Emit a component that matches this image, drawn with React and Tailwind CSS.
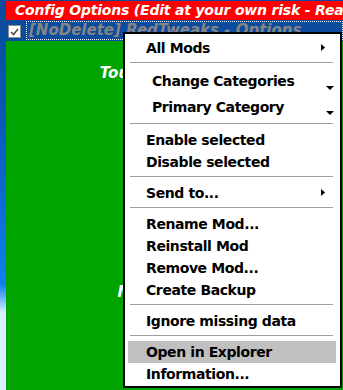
import React from 'react';

const SubArrow = () => (
  <svg className="absolute right-[11px] top-[7px]" width="4" height="7" viewBox="0 0 4 7">
    <polygon points="0,0 4,3.5 0,7" fill="#000" />
  </svg>
);

const DropArrow = ({ top }) => (
  <svg className={`absolute right-[2px] ${top}`} width="8" height="4" viewBox="0 0 8 4">
    <polygon points="0,0 8,0 4,4" fill="#000" />
  </svg>
);

const Item = ({ label, sub, active }) => (
  <div className={`relative ml-[3px] mr-[4px] flex h-[22px] items-center pl-[18px] ${active ? 'bg-[#c0c0c0]' : ''}`}>
    <span>{label}</span>
    {sub && <SubArrow />}
  </div>
);

const Sep = () => <div className="mb-[5px] ml-[5px] mr-[7px] mt-[3px] h-px bg-[#a0a0a0]" />;

const ContextMenu = () => (
  <div className="absolute left-[123px] top-[32px] w-[219px] border-2 border-black bg-white pb-px pt-[3px] font-['DejaVu_Sans',sans-serif] text-[14px] font-bold tracking-[-0.4px] text-black">
    <Item label="All Mods" sub />
    <Sep />
    <div className="relative ml-[3px] mr-[4px] flex h-[26px] items-center pl-[24px]">
      <span>Change Categories</span>
      <DropArrow top="top-[18px]" />
    </div>
    <div className="relative ml-[3px] mr-[4px] flex h-[26px] items-center pl-[24px]">
      <span>Primary Category</span>
      <DropArrow top="top-[17px]" />
    </div>
    <Sep />
    <Item label="Enable selected" />
    <Item label="Disable selected" />
    <Sep />
    <Item label="Send to..." sub />
    <Sep />
    <Item label="Rename Mod..." />
    <Item label="Reinstall Mod" />
    <Item label="Remove Mod..." />
    <Item label="Create Backup" />
    <Sep />
    <Item label="Ignore missing data" />
    <Sep />
    <Item label="Open in Explorer" active />
    <Item label="Information..." />
  </div>
);

export default function App() {
  return (
    <div className="relative flex h-[390px] w-[343px] flex-col overflow-hidden bg-[linear-gradient(180deg,#0a4a98_0%,#0b58b8_30%,#0d6ed8_55%,#1080f0_73%,#60acf4_76%,#d8f0ff_80%,#d8f0ff_100%)] pt-px font-['DejaVu_Sans',sans-serif]">
      <div className="ml-[6px] flex h-[19px] shrink-0 items-center overflow-hidden whitespace-nowrap bg-[#fe0000] pl-[9px] text-[14px] font-bold italic tracking-[-0.2px] text-white">
        Config Options (Edit at your own risk - ReadMe first)
      </div>
      <div className="ml-[6px] flex h-[21px] shrink-0 items-center bg-[#0b4c9e]">
        <div className="ml-[2px] mt-[2px] flex h-[13px] w-[13px] items-center justify-center border border-[#8c8c8c] bg-white">
          <svg width="9" height="8" viewBox="0 0 9 8">
            <polyline points="1,4 3.5,6.5 8,1" fill="none" stroke="#4a4a4a" strokeWidth="1.6" />
          </svg>
        </div>
        <div className="ml-[5px] flex h-[19px] flex-1 items-center whitespace-nowrap border border-dotted border-white pl-[2px] text-[15px] font-bold italic text-[#858585]">
          [NoDelete] RedTweaks - Options
        </div>
      </div>
      <div className="ml-[6px] flex flex-1 flex-col items-center bg-[#00a400] pt-[21px] text-[15px] font-bold italic text-white">
        <div className="ml-[16px]">Toughness Settings</div>
        <div className="mt-[196px]">Misc Settings</div>
      </div>
      <ContextMenu />
    </div>
  );
}
